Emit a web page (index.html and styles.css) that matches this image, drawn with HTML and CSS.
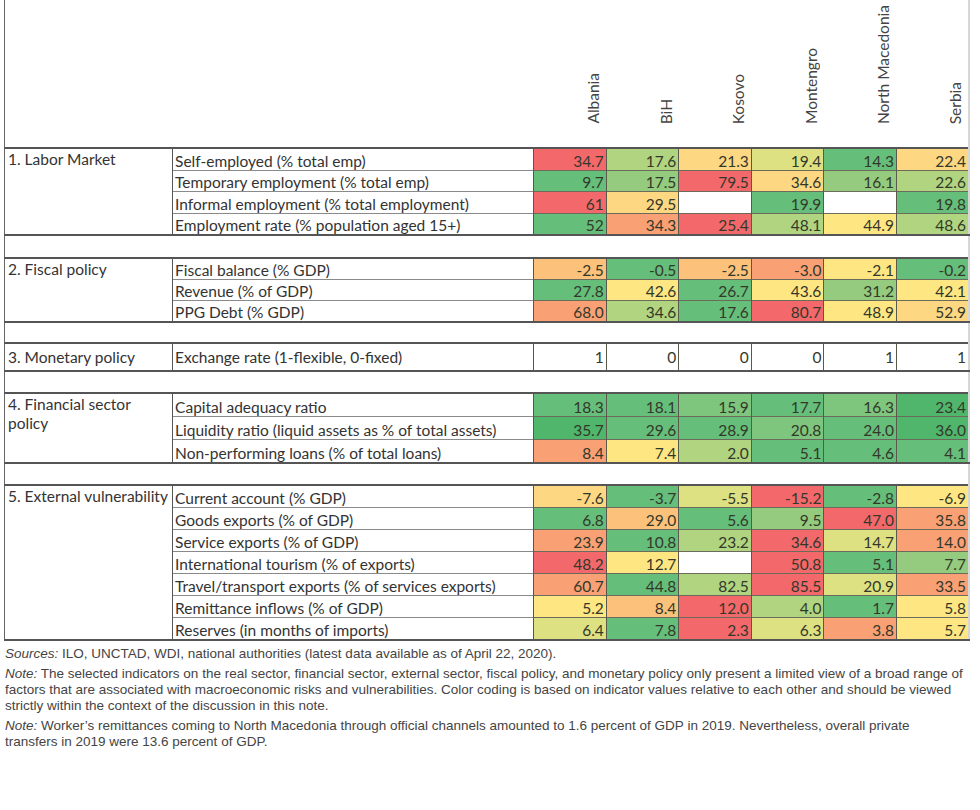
FILE: index.html
```html
<!DOCTYPE html>
<html>
<head>
<meta charset="utf-8">
<link rel="stylesheet" href="styles.css">
</head>
<body>
<div class="page">
<table class="grid">
<colgroup>
<col class="c-cat"><col class="c-ind">
<col class="c-num"><col class="c-num"><col class="c-num"><col class="c-num"><col class="c-num"><col class="c-num">
</colgroup>
<tr class="head">
<th class="first"></th><th></th>
<th><span class="rot">Albania</span></th>
<th><span class="rot">BiH</span></th>
<th><span class="rot">Kosovo</span></th>
<th><span class="rot">Montengro</span></th>
<th><span class="rot">North Macedonia</span></th>
<th class="last"><span class="rot">Serbia</span></th>
</tr>

<tr class="row tall top">
<td class="cat first" rowspan="4">1. Labor Market</td>
<td class="ind">Self-employed (% total emp)</td>
<td class="v r">34.7</td><td class="v lg">17.6</td><td class="v yo">21.3</td><td class="v yg">19.4</td><td class="v g">14.3</td><td class="v yo last">22.4</td>
</tr>
<tr class="row">
<td class="ind">Temporary employment (% total emp)</td>
<td class="v g">9.7</td><td class="v mg">17.5</td><td class="v r">79.5</td><td class="v yo">34.6</td><td class="v mg">16.1</td><td class="v lg last">22.6</td>
</tr>
<tr class="row tall">
<td class="ind">Informal employment (% total employment)</td>
<td class="v r">61</td><td class="v yo">29.5</td><td class="v w"></td><td class="v g">19.9</td><td class="v w"></td><td class="v g last">19.8</td>
</tr>
<tr class="row bot">
<td class="ind">Employment rate (% population aged 15+)</td>
<td class="v g">52</td><td class="v o">34.3</td><td class="v r">25.4</td><td class="v lg">48.1</td><td class="v y">44.9</td><td class="v lg last">48.6</td>
</tr>
<tr class="gap gap-a"><td class="first last" colspan="8"></td></tr>

<tr class="row top">
<td class="cat first" rowspan="3">2. Fiscal policy</td>
<td class="ind">Fiscal balance (% GDP)</td>
<td class="v oy">-2.5</td><td class="v g">-0.5</td><td class="v oy">-2.5</td><td class="v o">-3.0</td><td class="v y">-2.1</td><td class="v g last">-0.2</td>
</tr>
<tr class="row">
<td class="ind">Revenue (% of GDP)</td>
<td class="v g">27.8</td><td class="v y">42.6</td><td class="v g">26.7</td><td class="v y">43.6</td><td class="v mg">31.2</td><td class="v y last">42.1</td>
</tr>
<tr class="row bot">
<td class="ind">PPG Debt (% GDP)</td>
<td class="v o">68.0</td><td class="v lg">34.6</td><td class="v g">17.6</td><td class="v r">80.7</td><td class="v y">48.9</td><td class="v yo last">52.9</td>
</tr>
<tr class="gap gap-b"><td class="first last" colspan="8"></td></tr>

<tr class="row top bot mon">
<td class="cat first">3. Monetary policy</td>
<td class="ind">Exchange rate (1-flexible, 0-fixed)</td>
<td class="v w">1</td><td class="v w">0</td><td class="v w">0</td><td class="v w">0</td><td class="v w">1</td><td class="v w last">1</td>
</tr>
<tr class="gap gap-c"><td class="first last" colspan="8"></td></tr>

<tr class="row fin top">
<td class="cat first" rowspan="3">4. Financial sector<br>policy</td>
<td class="ind">Capital adequacy ratio</td>
<td class="v g">18.3</td><td class="v g">18.1</td><td class="v g3">15.9</td><td class="v g">17.7</td><td class="v g3">16.3</td><td class="v dg last">23.4</td>
</tr>
<tr class="row fin">
<td class="ind">Liquidity ratio (liquid assets as % of total assets)</td>
<td class="v dg">35.7</td><td class="v g">29.6</td><td class="v g">28.9</td><td class="v g3">20.8</td><td class="v g">24.0</td><td class="v dg last">36.0</td>
</tr>
<tr class="row fin bot">
<td class="ind">Non-performing loans (% of total loans)</td>
<td class="v o">8.4</td><td class="v y">7.4</td><td class="v lg">2.0</td><td class="v g">5.1</td><td class="v g">4.6</td><td class="v g last">4.1</td>
</tr>
<tr class="gap gap-d"><td class="first last" colspan="8"></td></tr>

<tr class="row ext top">
<td class="cat first" rowspan="7">5. External vulnerability</td>
<td class="ind">Current account (% GDP)</td>
<td class="v yo">-7.6</td><td class="v g">-3.7</td><td class="v yg">-5.5</td><td class="v r">-15.2</td><td class="v g">-2.8</td><td class="v y last">-6.9</td>
</tr>
<tr class="row ext">
<td class="ind">Goods exports (% of GDP)</td>
<td class="v g">6.8</td><td class="v oy">29.0</td><td class="v g">5.6</td><td class="v mg">9.5</td><td class="v r">47.0</td><td class="v o last">35.8</td>
</tr>
<tr class="row ext">
<td class="ind">Service exports (% of GDP)</td>
<td class="v o">23.9</td><td class="v g">10.8</td><td class="v lg">23.2</td><td class="v r">34.6</td><td class="v yg">14.7</td><td class="v o last">14.0</td>
</tr>
<tr class="row ext">
<td class="ind">International tourism (% of exports)</td>
<td class="v r">48.2</td><td class="v y">12.7</td><td class="v w"></td><td class="v r">50.8</td><td class="v g">5.1</td><td class="v mg last">7.7</td>
</tr>
<tr class="row ext">
<td class="ind">Travel/transport exports (% of services exports)</td>
<td class="v o">60.7</td><td class="v g">44.8</td><td class="v lg">82.5</td><td class="v r">85.5</td><td class="v yg">20.9</td><td class="v o last">33.5</td>
</tr>
<tr class="row ext">
<td class="ind">Remittance inflows (% of GDP)</td>
<td class="v y">5.2</td><td class="v oy">8.4</td><td class="v r">12.0</td><td class="v lg">4.0</td><td class="v g">1.7</td><td class="v y last">5.8</td>
</tr>
<tr class="row ext bot">
<td class="ind">Reserves (in months of imports)</td>
<td class="v yg">6.4</td><td class="v g">7.8</td><td class="v r">2.3</td><td class="v yg">6.3</td><td class="v o">3.8</td><td class="v y last">5.7</td>
</tr>
</table>

<div class="notes">
<p><em>Sources:</em> ILO, UNCTAD, WDI, national authorities (latest data available as of April 22, 2020).</p>
<p><em>Note:</em> The selected indicators on the real sector, financial sector, external sector, fiscal policy, and monetary policy only present a limited view of a broad range of<br>factors that are associated with macroeconomic risks and vulnerabilities. Color coding is based on indicator values relative to each other and should be viewed<br>strictly within the context of the discussion in this note.</p>
<p><em>Note:</em> Worker’s remittances coming to North Macedonia through official channels amounted to 1.6 percent of GDP in 2019. Nevertheless, overall private<br>transfers in 2019 were 13.6 percent of GDP.</p>
</div>
</div>
</body>
</html>
```

FILE: styles.css
```css
html, body {
  margin: 0;
  padding: 0;
  background: #ffffff;
}

.page {
  padding: 0 10px 0 4px;
}

.grid {
  border-collapse: collapse;
  table-layout: fixed;
  width: 966px;
  font-family: "Lato", "Open Sans", sans-serif;
  font-size: 15.5px;
  color: #333333;
}

.c-cat { width: 168px; }
.c-ind { width: 361px; }
.c-num { width: 72.5px; }

.grid td, .grid th {
  padding: 0;
  overflow: hidden;
  white-space: nowrap;
}

.head th {
  height: 127px;
  vertical-align: bottom;
  text-align: right;
  padding: 0 5px 20px 0;
  font-weight: normal;
  color: #444444;
  font-size: 15.5px;
}

.rot {
  display: inline-block;
  writing-mode: vertical-rl;
  transform: rotate(180deg);
  line-height: 16px;
}

.first { border-left: 1px solid #666666; }
.last { border-right: 2px solid #d6d6d6; }

.row td { height: 20px; line-height: 18px; }
.row.tall td { height: 21px; }
.row.mon td { height: 25px; vertical-align: middle; }
.row.fin td { height: 22px; }
.row.ext td { height: 21px; }

.cat {
  vertical-align: top;
  padding: 1px 0 0 3px !important;
  line-height: 19px !important;
  border-bottom: 2px solid #555555;
}

.ind {
  padding: 0 2px 0 2px !important;
  border-left: 1px solid #555555;
  border-right: 1px solid #555555;
  border-top: 1px solid #8a8a8a;
  vertical-align: bottom;
}

.v {
  text-align: right;
  padding-right: 2px !important;
  vertical-align: bottom;
  border-left: 1px solid #5a5a4a;
  border-top: 1px solid #6b6b5b;
  color: #33382a;
}

.row.top td { border-top: 2px solid #555555; }
.row.bot td { border-bottom: 2px solid #555555; }
.row td.last { border-right: 2px solid #d6d6d6; }

.gap td { height: 20px; }
.gap.gap-a td { height: 21px; }
.gap.gap-b td { height: 19px; }
.gap.gap-c td { height: 20px; }
.gap.gap-d td { height: 20px; }

/* colour scale */
.w  { background: #ffffff; }
.r  { background: #f3696b; }
.o  { background: #f9a074; }
.oy { background: #fcc27c; }
.yo { background: #fdd782; }
.y  { background: #fee683; }
.yg { background: #dde182; }
.lg { background: #b0d47f; }
.mg { background: #94cb7e; }
.g3 { background: #7ec57d; }
.g  { background: #66be7b; }
.dg { background: #4fb66c; }

.notes {
  margin-top: 5px;
  padding-left: 1px;
  font-family: "Liberation Sans", Arial, sans-serif;
  font-size: 13.5px;
  line-height: 16px;
  color: #444444;
  white-space: nowrap;
}

.notes p {
  margin: 0 0 4px 0;
}
```
